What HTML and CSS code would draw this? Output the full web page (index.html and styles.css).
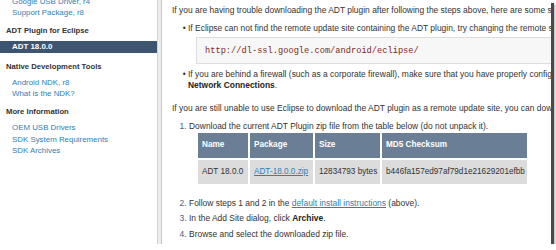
FILE: index.html
```html
<!DOCTYPE html>
<html lang="en">
<head>
  <meta charset="utf-8" />
  <title>ADT Plugin for Eclipse</title>
  <link rel="stylesheet" href="styles.css">
</head>
<body>
  <div class="shot">
    <!-- Left navigation -->
    <div class="nav">
      <ul class="nav-list first">
        <li><a href="#">Google USB Driver, r4</a></li>
        <li><a href="#">Support Package, r8</a></li>
      </ul>
      <h4>ADT Plugin for Eclipse</h4>
      <ul class="nav-list">
        <li class="current"><a href="#">ADT 18.0.0</a></li>
      </ul>
      <h4 class="after-current">Native Development Tools</h4>
      <ul class="nav-list">
        <li><a href="#">Android NDK, r8</a></li>
        <li><a href="#">What is the NDK?</a></li>
      </ul>
      <h4>More Information</h4>
      <ul class="nav-list">
        <li><a href="#">OEM USB Drivers</a></li>
        <li><a href="#">SDK System Requirements</a></li>
        <li><a href="#">SDK Archives</a></li>
      </ul>
    </div>

    <!-- Page content -->
    <div class="main">
      <p class="intro">If you are having trouble downloading the ADT plugin after following the steps above, here are some suggestions:</p>
      <ul class="tips">
        <li>If Eclipse can not find the remote update site containing the ADT plugin, try changing the remote site URL to use http, instead of https. That is, set the Location for the remote site to:
          <pre>http://dl-ssl.google.com/android/eclipse/</pre>
        </li>
        <li>If you are behind a firewall (such as a corporate firewall), make sure that you have properly configured your proxy settings in Eclipse. In Eclipse, you can configure proxy settings from the main Eclipse menu in <b>Window</b> (on Mac OS X, <b>Eclipse</b>) &gt; <b>Preferences</b> &gt; <b>General</b> &gt;<br><b>Network Connections</b>.</li>
      </ul>
      <p class="still">If you are still unable to use Eclipse to download the ADT plugin as a remote update site, you can download the ADT zip file to your local machine and manually install it:</p>
      <ol class="steps">
        <li>Download the current ADT Plugin zip file from the table below (do not unpack it).
          <table class="downloads">
            <colgroup>
              <col class="c-name">
              <col class="c-pkg">
              <col class="c-size">
              <col class="c-md5">
            </colgroup>
            <tr>
              <th>Name</th>
              <th>Package</th>
              <th>Size</th>
              <th>MD5 Checksum</th>
            </tr>
            <tr>
              <td>ADT 18.0.0</td>
              <td><a href="#">ADT-18.0.0.zip</a></td>
              <td>12834793 bytes</td>
              <td>b446fa157ed97af79d1e21629201efbb</td>
            </tr>
          </table>
        </li>
        <li>Follow steps 1 and 2 in the <a href="#">default install instructions</a> (above).</li>
        <li>In the Add Site dialog, click <b>Archive</b>.</li>
        <li>Browse and select the downloaded zip file.</li>
        <li>Enter a name for the local update site (e.g., "Android Plugin") in the "Name" field.</li>
      </ol>
    </div>
  </div>
</body>
</html>
```

FILE: styles.css
```css
* {
    margin: 0;
    padding: 0;
    box-sizing: border-box;
}

body {
    background-color: #ffffff;
    font-family: "Liberation Sans", Arial, sans-serif;
    color: #333333;
}

.shot {
    display: flex;
    width: 551px;
    height: 244px;
    overflow: hidden;
    background-color: #ffffff;
    box-shadow: 3px 3px 0 #4a4a4a, 4px 4px 3px #aaaaaa;
}

/* Sidebar */
.nav {
    flex: none;
    width: 158px;
    border-right: 1px solid #d2d2d2;
    font-size: 7.9px;
}

.nav h4 {
    font-size: 7.7px;
    line-height: 12px;
    padding-left: 6px;
    margin: 6.4px 0 3.4px;
    color: #333333;
}

.nav h4.after-current {
    margin-top: 8px;
}

.nav-list {
    list-style: none;
}

.nav-list.first {
    margin-top: -4.4px;
}

.nav-list li {
    line-height: 11.7px;
    padding-left: 12px;
}

.nav-list a {
    color: #2e7fb8;
    text-decoration: none;
}

.nav-list li.current {
    background-color: #3d5570;
    line-height: 12.5px;
}

.nav-list li.current a {
    color: #ffffff;
    font-weight: bold;
}

/* Main content */
.main {
    flex: 1;
    min-width: 0;
    border-left: 3px solid #ececec;
    box-shadow: inset 1px 0 0 #c8c8c8;
    padding: 5px 0 0 11px;
    font-size: 8.45px;
    line-height: 11px;
    white-space: nowrap;
}

.main a {
    color: #2e7fb8;
    text-decoration: underline;
}

.main b {
    color: #222222;
}

.intro {
    margin-bottom: 7px;
}

.tips {
    padding-left: 16px;
}

.tips li::marker {
    content: "\2022  ";
    color: #333333;
}

.tips li + li {
    margin-top: 5.5px;
}

pre {
    margin: 2.5px -4px 0 8px;
    padding: 8px 8px 6px;
    border: 1px solid #dddddd;
    background-color: #f7f7f7;
    font-family: "Liberation Mono", "Courier New", monospace;
    font-size: 8.7px;
    line-height: 11px;
    color: #7c2b1c;
}

.still {
    margin: 11.5px 0 7.3px;
}

.steps {
    padding-left: 17px;
}

.steps li {
    margin-bottom: 4.2px;
}

.steps li::marker {
    color: #4a6285;
}

.downloads {
    margin: -0.5px 0 12px 7px;
    border-spacing: 2px;
    table-layout: fixed;
    width: 333px;
    font-size: 8.2px;
    text-align: left;
}

.c-name { width: 50px; }
.c-pkg { width: 63px; }
.c-size { width: 65px; }
.c-md5 { width: 145px; }

.downloads th {
    background-color: #6a7f95;
    color: #ffffff;
    font-weight: bold;
    line-height: 24.3px;
    padding: 0 4px;
}

.downloads td {
    background-color: #dcdcdc;
    line-height: 24.7px;
    padding: 0 4px;
}
```
